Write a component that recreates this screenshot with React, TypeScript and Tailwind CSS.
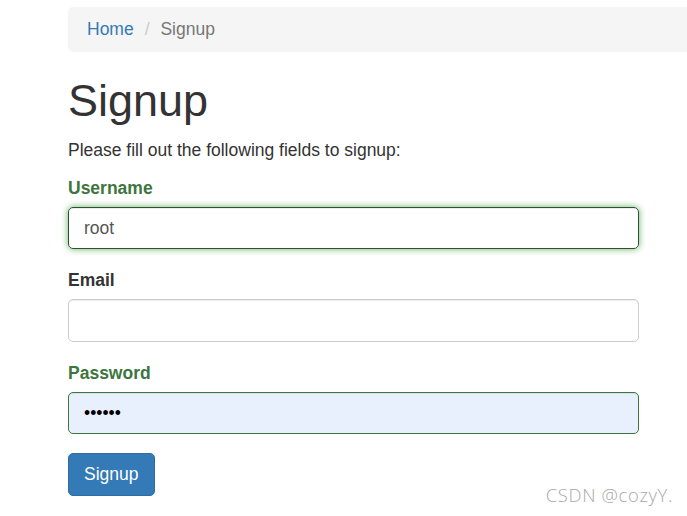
export default function App() {
  return (
    <div className="relative h-[516px] w-full overflow-hidden bg-white font-['Liberation_Sans',Arial,sans-serif] text-[17.5px] leading-[25px] text-[#333]">
      <div className="pl-[68px] pt-[7px]">
        <ol className="flex w-[700px] rounded-[5px] bg-[#f5f5f5] px-[19px] py-[10px]">
          <li>
            <a className="text-[#337ab7]">Home</a>
          </li>
          <li className="ml-[5px] text-[#777]">
            <span className="px-[6px] text-[#ccc]">{'/\u00a0'}</span>
            Signup
          </li>
        </ol>

        <div className="w-[571px]">
          <h1 className="mt-[24px] mb-[12.5px] text-[45px] leading-[49.5px] font-normal">Signup</h1>
          <p className="mb-[12.5px]">Please fill out the following fields to signup:</p>

          <form className="flex flex-col">
            <div className="mb-[18.75px] flex flex-col items-start">
              <label className="mb-[6.25px] font-bold text-[#3c763d]">Username</label>
              <input
                type="text"
                defaultValue="root"
                className="h-[42.5px] w-full rounded-[5px] border border-[#2b542c] px-[15px] text-[17.5px] text-[#555] shadow-[inset_0_1px_1px_rgba(0,0,0,0.075),0_0_7px_#67b168] outline-none"
              />
            </div>
            <div className="mb-[18.75px] flex flex-col items-start">
              <label className="mb-[6.25px] font-bold">Email</label>
              <input
                type="text"
                className="h-[42.5px] w-full rounded-[5px] border border-[#ccc] px-[15px] text-[17.5px] text-[#555] shadow-[inset_0_1px_1px_rgba(0,0,0,0.075)] outline-none"
              />
            </div>
            <div className="mb-[18.75px] flex flex-col items-start">
              <label className="mb-[6.25px] font-bold text-[#3c763d]">Password</label>
              <input
                type="password"
                defaultValue="123456"
                className="h-[42.5px] w-full rounded-[5px] border border-[#3c763d] bg-[#e8f0fe] px-[15px] text-[17.5px] text-black shadow-[inset_0_1px_1px_rgba(0,0,0,0.075)] outline-none"
              />
            </div>
            <div>
              <button
                type="button"
                className="h-[42.5px] rounded-[5px] border border-[#2e6da4] bg-[#337ab7] px-[15px] text-[17.5px] text-white"
              >
                Signup
              </button>
            </div>
          </form>
        </div>
      </div>

      <div className="absolute right-[14px] bottom-[9px] font-['Open_Sans',sans-serif] text-[18.5px] font-light tracking-[0.6px] text-[#a8a8a8]">
        CSDN @cozyY.
      </div>
    </div>
  )
}
